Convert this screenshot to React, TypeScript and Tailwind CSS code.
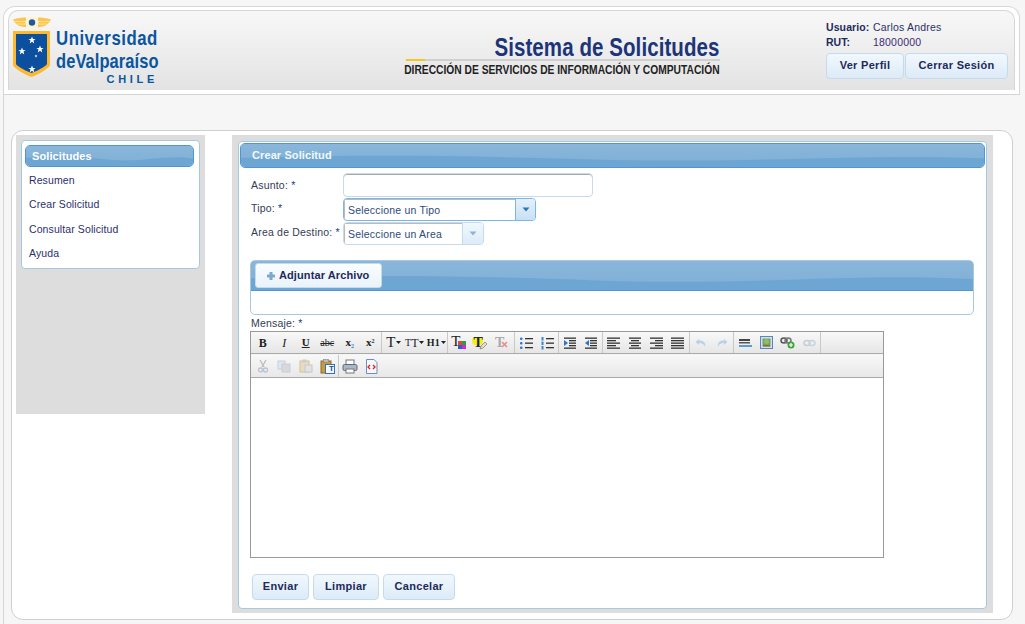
import React from "react";

const SANS = "font-['Liberation_Sans',Arial,sans-serif]";

function Wave({ id }: { id: string }) {
  return (
    <svg className="absolute inset-0 w-full h-full" viewBox="0 0 1000 100" preserveAspectRatio="none" aria-hidden="true">
      <defs>
        <linearGradient id={id} x1="0" y1="0" x2="0" y2="1">
          <stop offset="0" stopColor="#8ab6da" />
          <stop offset="1" stopColor="#82b1d7" />
        </linearGradient>
      </defs>
      <rect width="1000" height="100" fill="#6ea6d3" />
      <path d="M0 0H1000V62C820 40 690 88 470 66C300 50 160 46 0 60Z" fill={`url(#${id})`} />
    </svg>
  );
}

function BlueBar({ id, className, children }: { id: string; className: string; children?: React.ReactNode }) {
  return (
    <div className={`relative overflow-hidden border border-[#4f97d3] ${className}`}>
      <Wave id={id} />
      <div className="relative h-full flex items-center">{children}</div>
    </div>
  );
}

function Btn({ w, children, className = "" }: { w: string; children: React.ReactNode; className?: string }) {
  return (
    <button className={`h-[26px] pb-[2px] rounded-[4px] border border-[#c5dbec] bg-gradient-to-b from-[#f1f8fd] to-[#dcebf8] text-[11px] font-bold tracking-[0.3px] text-[#1d2a5a] ${w} ${className}`}>
      {children}
    </button>
  );
}

function Logo() {
  return (
    <div className="flex items-start w-[150px] h-[70px]">
      <svg width="38" height="62" viewBox="0 0 38 62" className="shrink-0" aria-hidden="true">
        <path d="M0 3.500C5 2 9 1.500 13 1.500L13 11C8 11 6 10 4 8.500C2 7 1 5 0 3.500ZM38 3.500C33 2 29 1.500 25 1.500L25 11C30 11 32 10 34 8.500C36 7 37 5 38 3.500Z" fill="#fbc64f" />
        <path d="M2 5.500H13M4 8H13M25 5.500H36M25 8H34" stroke="#fde7a6" strokeWidth="0.800" />
        <circle cx="19" cy="6.500" r="6.500" fill="#fff4d0" />
        <circle cx="19" cy="6.500" r="3.200" fill="#1c5aa6" />
        <path d="M0 15H37V49C37 51 29 57 18.500 61C8 57 0 51 0 49Z" fill="#fdb92e" />
        <path d="M3 18H34V48C34 49 27 54 18.500 57C10 54 3 49 3 48Z" fill="#0b4f9e" />
        {[[19, 24, 3.6], [9, 35, 3.6], [27, 33, 3.6], [19, 53, 3.6], [23, 40, 1.4]].map(([x, y, r], i) => (
          <path
            key={i}
            d={`M${x} ${y - r}L${x + r * 0.28} ${y - r * 0.3}L${x + r} ${y - r * 0.3}L${x + r * 0.42} ${y + r * 0.14}L${x + r * 0.62} ${y + r}L${x} ${y + r * 0.46}L${x - r * 0.62} ${y + r}L${x - r * 0.42} ${y + r * 0.14}L${x - r} ${y - r * 0.3}L${x - r * 0.28} ${y - r * 0.3}Z`}
            fill="#fff"
          />
        ))}
      </svg>
      <div className="ml-[5px] mt-[9px] w-[102px] text-[#0a55a0] font-bold">
        <div className="text-[21px] leading-[25px] tracking-[0.65px] whitespace-nowrap origin-left scale-x-[0.8]">Universidad</div>
        <div className="text-[21px] leading-[22px] tracking-[0.1px] whitespace-nowrap origin-left scale-x-[0.785]">deValparaíso</div>
        <div className="text-[11px] leading-[14px] tracking-[3.7px] text-right whitespace-nowrap">CHILE</div>
      </div>
    </div>
  );
}

function Header() {
  return (
    <div className="mx-[3px] w-[1017px] pt-[3px] px-[4px] h-[85px] bg-white rounded-t-[12px] border border-b-0 border-[#d8d8d8]">
      <div className="h-[80px] rounded-t-[10px] border border-b-0 border-[#d6d6d6] bg-gradient-to-b from-[#f8f8f8] to-[#e3e3e3] flex relative">
        <div className="ml-[4px] mt-[5px] w-[393px]">
          <Logo />
        </div>
        <div className="w-[314px] pt-[24px] flex flex-col items-end">
          <div className="text-[25px] leading-[24px] font-bold text-[#1c3478] tracking-[0.1px] whitespace-nowrap origin-right scale-x-[0.82]">Sistema de Solicitudes</div>
          <div className="w-full h-[2px] bg-[#d0d0d0] flex">
            <div className="w-[19px] bg-[#f6c71c]" />
          </div>
          <div className="text-[12.5px] leading-[14px] mt-[2px] font-bold text-[#222] whitespace-nowrap origin-right scale-x-[0.82]">DIRECCIÓN DE SERVICIOS DE INFORMACIÓN Y COMPUTACIÓN</div>
        </div>
        <div className="ml-[106px] pt-[9px] w-[185px] text-[10.5px] text-[#2b3166]">
          <div className="flex h-[14px] leading-[14px]"><b className="w-[47px] font-bold text-[#1d2a5a] tracking-[0.1px]">Usuario:</b><span className="tracking-[0.2px]">Carlos Andres</span></div>
          <div className="flex h-[15px] leading-[15px] mt-[1px]"><b className="w-[47px] font-bold text-[#1d2a5a]">RUT:</b><span className="tracking-[0.2px] text-[#3a2a76]">18000000</span></div>
          <div className="flex gap-px mt-[3px]">
            <Btn w="w-[78px]">Ver Perfil</Btn>
            <Btn w="w-[103px]">Cerrar Sesión</Btn>
          </div>
        </div>
      </div>
    </div>
  );
}

function Sidebar() {
  return (
    <div className="w-[189px] h-[279px] bg-[#dddddd] p-[5px]">
      <div className="h-[129px] w-[179px] bg-white rounded-[4px] border border-[#a6c9e2] pt-[4px] pl-[3px] pr-[5px]">
        <BlueBar id="w1" className="h-[22px] rounded-[5px]">
          <span className="pl-[6px] text-[11px] font-bold text-white tracking-[0.1px]">Solicitudes</span>
        </BlueBar>
        <div className="pl-[4px] pt-[1px] text-[10.5px] text-[#2b2f6c] tracking-[0.1px]">
          {["Resumen", "Crear Solicitud", "Consultar Solicitud", "Ayuda"].map((t) => (
            <div key={t} className="h-[24.3px] leading-[24px]">{t}</div>
          ))}
        </div>
      </div>
    </div>
  );
}

function Select({ text, w, tw, active }: { text: string; w: string; tw: string; active?: boolean }) {
  return (
    <div className={`h-[23px] rounded-[4px] bg-white flex border overflow-hidden ${w} ${active ? "border-[#79b7e7]" : "border-[#c5dbec]"}`}>
      <div className="flex-1 pl-[4px] leading-[22px] text-[10.5px] text-[#2e4a7a] tracking-[0.2px] shadow-[inset_1px_1px_0_#bbb]">{text}</div>
      <div className={`${tw} border-l ${active ? "border-[#79b7e7] from-[#e4f0fa] to-[#c8e0f4]" : "border-[#c5dbec] from-[#f1f8fd] to-[#dcebf8]"} bg-gradient-to-b flex items-center justify-center`}>
        <svg width="8" height="5" viewBox="0 0 8 5" aria-hidden="true"><path d="M0.500 0.500H7.500L4 4.500Z" fill={active ? "#2f76b8" : "#8fb4d8"} /></svg>
      </div>
    </div>
  );
}

function Lines({ kind }: { kind: "left" | "center" | "right" | "full" | "bul" | "num" | "in" | "out" }) {
  const rows = [3, 5.500, 8, 10.500, 13];
  const span = (i: number): [number, number] => {
    const short = i % 2 === 1;
    if (kind === "left") return [1, short ? 10 : 14];
    if (kind === "center") return short ? [4, 12] : [2, 14];
    if (kind === "right") return short ? [6, 14] : [1, 14];
    if (kind === "full") return [1, 14];
    if (kind === "bul" || kind === "num") return [7, 15];
    return i === 0 || i === 4 ? [2, 14] : [7, 14];
  };
  const list = kind === "bul" || kind === "num";
  return (
    <svg width="16" height="16" viewBox="0 0 16 16" aria-hidden="true">
      {(list ? [3.500, 8, 12.500] : rows).map((y, i) => {
        const [a, b] = span(i);
        return <rect key={y} x={a} y={y - 0.5} width={b - a} height="1.300" fill="#333" />;
      })}
      {kind === "bul" && [3.500, 8, 12.500].map((y) => <rect key={y} x="2" y={y - 1} width="2.500" height="2.500" rx="1" fill="#2a78c8" />)}
      {kind === "num" && [3.500, 8, 12.500].map((y) => <rect key={y} x="2.500" y={y - 1.5} width="2" height="3.500" fill="#3f85cc" />)}
      {kind === "in" && <path d="M2 5L6 8L2 11Z" fill="#2a78c8" />}
      {kind === "out" && <path d="M6 5L2 8L6 11Z" fill="#2a78c8" />}
    </svg>
  );
}

const serif = "font-['Liberation_Serif',serif] text-[#222]";

function TB({ children }: { children?: React.ReactNode }) {
  return <div className="w-[21.5px] h-full flex items-center justify-center shrink-0 relative">{children}</div>;
}

function G({ children, className = "" }: { children: React.ReactNode; className?: string }) {
  return <div className={`flex h-full border-r border-[#c8c8c8] ${className}`}>{children}</div>;
}

function SmallArrow() {
  return <svg width="5" height="3" viewBox="0 0 5 3" className="ml-px" aria-hidden="true"><path d="M0 0H5L2.500 3Z" fill="#222" /></svg>;
}

function Toolbar() {
  return (
    <div className="text-[#222]">
      <div className="h-[22px] flex pl-[1px] bg-gradient-to-b from-[#f8f8f8] to-[#e6e6e6] border-b border-[#aaa]">
        <G>
          <TB><span className={`${serif} font-bold text-[12px]`}>B</span></TB>
          <TB><span className={`${serif} italic text-[12px]`}>I</span></TB>
          <TB><span className={`${serif} font-bold underline text-[11px]`}>U</span></TB>
          <TB><span className={`${serif} line-through text-[10px]`}>abc</span></TB>
          <TB><span className={`${serif} font-bold text-[11px] ml-[2px]`}>x<sub className="text-[6px] text-[#3a7fc8]">2</sub></span></TB>
          <TB><span className={`${serif} font-bold text-[11px]`}>x<sup className="text-[6px] text-[#333]">2</sup></span></TB>
        </G>
        <G>
          <TB><span className={`${serif} text-[15px] leading-none flex items-center ml-[2px]`}>T<SmallArrow /></span></TB>
          <TB><span className={`${serif} text-[12px] leading-none flex items-center ml-[1px]`}><span className="text-[10px]">T</span>T<SmallArrow /></span></TB>
          <TB><span className={`${serif} font-bold text-[10px] leading-none flex items-center ml-[1px]`}>H1<SmallArrow /></span></TB>
        </G>
        <G className="pr-[2px]">
          <TB>
            <span className={`${serif} text-[15px] leading-none -mt-[2px] -ml-[5px]`}>T</span>
            <svg width="8" height="8" viewBox="0 0 8 8" className="absolute right-[3px] bottom-[4px]" aria-hidden="true">
              <rect width="4" height="4" fill="#e8482a" /><rect x="4" width="4" height="4" fill="#2f9e3a" /><rect y="4" width="4" height="4" fill="#2a5fd0" /><rect x="4" y="4" width="4" height="4" fill="#d02ad0" />
            </svg>
          </TB>
          <TB>
            <span className="absolute left-[3px] top-[5px] w-[11px] h-[8px] rounded-full bg-[#f2f215]" />
            <span className={`${serif} relative font-bold text-[14px] leading-none -ml-[3px]`}>T</span>
            <svg width="9" height="9" viewBox="0 0 9 9" className="absolute right-[3px] bottom-[3px]" aria-hidden="true"><path d="M1 8L2 5L6 1L8 3L4 7Z" fill="#e8e0c0" stroke="#777" strokeWidth="0.700" /></svg>
          </TB>
          <TB>
            <span className={`${serif} font-bold text-[14px] leading-none !text-[#aaa] -ml-[3px]`}>T</span>
            <svg width="7" height="7" viewBox="0 0 7 7" className="absolute right-[4px] bottom-[5px]" aria-hidden="true"><path d="M1 1L6 6M6 1L1 6" stroke="#e88" strokeWidth="1.500" /></svg>
          </TB>
        </G>
        <G>
          <TB><Lines kind="bul" /></TB>
          <TB><Lines kind="num" /></TB>
        </G>
        <G>
          <TB><Lines kind="in" /></TB>
          <TB><Lines kind="out" /></TB>
        </G>
        <G>
          <TB><Lines kind="left" /></TB>
          <TB><Lines kind="center" /></TB>
          <TB><Lines kind="right" /></TB>
          <TB><Lines kind="full" /></TB>
        </G>
        <G>
          <TB><svg width="14" height="12" viewBox="0 0 14 12" aria-hidden="true"><path d="M5 2L1.500 5L5 8V6C8 6 10 7 11 10C12 6 10 3.500 5 3.500Z" fill="#bcd0e6" /></svg></TB>
          <TB><svg width="14" height="12" viewBox="0 0 14 12" aria-hidden="true"><path d="M9 2L12.500 5L9 8V6C6 6 4 7 3 10C2 6 4 3.500 9 3.500Z" fill="#bcd0e6" /></svg></TB>
        </G>
        <G>
          <TB><svg width="14" height="12" viewBox="0 0 14 12" aria-hidden="true"><rect x="1" y="2" width="11" height="2" fill="#444" /><rect x="1" y="5" width="11" height="1.500" fill="#555" /><rect x="1" y="8" width="13" height="2" fill="#5b9bd8" /></svg></TB>
          <TB><svg width="13" height="13" viewBox="0 0 13 13" aria-hidden="true"><rect x="0.500" y="0.500" width="12" height="12" fill="#cfe0f2" stroke="#5c86b8" /><rect x="2.500" y="2.500" width="8" height="8" fill="#7aa06a" /><circle cx="6.500" cy="5.500" r="2.500" fill="#8fc05a" /><rect x="3" y="9" width="7" height="1.500" fill="#9a6a30" /></svg></TB>
          <TB><svg width="15" height="13" viewBox="0 0 15 13" aria-hidden="true"><ellipse cx="4" cy="4.500" rx="3" ry="2.500" fill="none" stroke="#555" strokeWidth="1.500" /><ellipse cx="8" cy="4.500" rx="3" ry="2.500" fill="none" stroke="#777" strokeWidth="1.500" /><circle cx="11" cy="9" r="3.500" fill="#3da53d" /><path d="M9 9H13M11 7V11" stroke="#fff" strokeWidth="1.200" /></svg></TB>
          <TB><svg width="15" height="12" viewBox="0 0 15 12" aria-hidden="true"><ellipse cx="5" cy="6" rx="3" ry="2.500" fill="none" stroke="#ccc" strokeWidth="1.500" /><ellipse cx="10" cy="6" rx="3" ry="2.500" fill="none" stroke="#c5d4e4" strokeWidth="1.500" /></svg></TB>
        </G>
      </div>
      <div className="h-px bg-[#f4f4f4]" />
      <div className="h-[23px] flex pl-[1px] bg-gradient-to-b from-[#f8f8f8] to-[#e8e8e8] border-b border-[#aaa]">
        <G>
          <TB><svg width="12" height="14" viewBox="0 0 12 14" aria-hidden="true"><path d="M3 1L7 8M9 1L5 8" stroke="#bbb" strokeWidth="1.300" /><circle cx="3.500" cy="11" r="2" fill="none" stroke="#b8c4d4" strokeWidth="1.300" /><circle cx="8.500" cy="11" r="2" fill="none" stroke="#b8c4d4" strokeWidth="1.300" /></svg></TB>
          <TB><svg width="14" height="13" viewBox="0 0 14 13" aria-hidden="true"><rect x="1" y="1" width="7" height="8" fill="#dfe6ef" stroke="#c8d0dc" /><rect x="5" y="4" width="8" height="8" fill="#d9d9d9" stroke="#c4cedc" /></svg></TB>
          <TB><svg width="14" height="14" viewBox="0 0 14 14" aria-hidden="true"><rect x="1" y="2" width="9" height="11" fill="#e8dcc0" stroke="#cfc0a0" /><rect x="3.500" y="0.500" width="4" height="3" fill="#ccc" /><rect x="6" y="6" width="7" height="7" fill="#e2e2e2" stroke="#c8c8c8" /></svg></TB>
          <TB>
            <svg width="15" height="15" viewBox="0 0 15 15" aria-hidden="true"><rect x="1" y="2" width="10" height="12" fill="#c89a3c" stroke="#8a6a2a" /><rect x="3.500" y="0.500" width="5" height="3" fill="#bbb" stroke="#777" strokeWidth="0.500" /><rect x="5.500" y="5.500" width="9" height="9" fill="#f2f8ff" stroke="#3a6fa8" /></svg>
            <span className={`absolute right-[4px] bottom-[4px] text-[8px] leading-none font-bold text-[#1e4f90] ${SANS}`}>T</span>
          </TB>
        </G>
        <TB><svg width="16" height="15" viewBox="0 0 16 15" aria-hidden="true"><rect x="4" y="1" width="8" height="5" fill="#fff" stroke="#777" /><rect x="1" y="5.500" width="14" height="6" rx="1.500" fill="#a8b8c8" stroke="#667" /><rect x="4" y="10" width="8" height="4" fill="#fff" stroke="#777" /></svg></TB>
        <TB><svg width="13" height="15" viewBox="0 0 13 15" aria-hidden="true"><path d="M1.500 0.500H9L12 3.500V14.500H1.500Z" fill="#f4f7fb" stroke="#6f8fb5" /><path d="M5 6L3 8L5 10M8 6L10 8L8 10" fill="none" stroke="#d22" strokeWidth="1.300" /></svg></TB>
      </div>
    </div>
  );
}

function Field({ label, children, className = "", lp }: { label: string; children: React.ReactNode; className?: string; lp: string }) {
  return (
    <div className={`flex items-start ${className}`}>
      <div className={`w-[93px] pl-[1px] text-[10.5px] leading-[18px] text-[#333c55] tracking-[0.2px] whitespace-nowrap ${lp}`}>
        {label} <span className="text-[#23408e]">*</span>
      </div>
      {children}
    </div>
  );
}

function Form() {
  return (
    <div className="w-[749px] h-[468px] bg-white rounded-[4px] border border-[#a6c9e2] pt-[1px] px-[1px]">
      <BlueBar id="w2" className="h-[25px] rounded-[5px]">
        <span className="pl-[11px] text-[11px] font-bold text-[#f2f7fb] tracking-[0.1px]">Crear Solicitud</span>
      </BlueBar>
      <div className="pl-[10px] pt-[5px]">
        <Field label="Asunto:" lp="pt-[3px]">
          <div className="w-[250px] h-[24px] rounded-[4px] border border-[#c5dbec] shadow-[inset_0_1px_0_#aaa] bg-white" />
        </Field>
        <Field label="Tipo:" className="mt-[1px]" lp="pt-[1px]">
          <Select text="Seleccione un Tipo" w="w-[193px]" tw="w-[20px]" active />
        </Field>
        <Field label="Area de Destino:" className="mt-[1px]" lp="pt-[1px]">
          <Select text="Seleccione un Area" w="w-[141px]" tw="w-[21px]" />
        </Field>
        <div className="mt-[15px] w-[724px] h-[55px] rounded-[5px] border border-[#a6c9e2] overflow-hidden">
          <BlueBar id="w3" className="h-[31px] -m-px border-[#4f97d3] w-[724px]">
            <div className="ml-[4px] w-[127px] h-[25px] rounded-[3px] border border-[#c5dbec] bg-gradient-to-b from-[#fbfdff] to-[#e9f3fb] flex items-center pl-[10px]">
              <svg width="10" height="10" viewBox="0 0 10 10" aria-hidden="true"><path d="M3.500 1H6.500V3.500H9V6.500H6.500V9H3.500V6.500H1V3.500H3.500Z" fill="#7ea9cf" /></svg>
              <span className="ml-[3px] text-[11px] font-bold text-[#1d2a5a] tracking-[0.1px]">Adjuntar Archivo</span>
            </div>
          </BlueBar>
        </div>
        <div className="h-[16px] leading-[16px] pl-[1px] text-[10.5px] text-[#333c55] tracking-[0.2px]">Mensaje: <span className="text-[#23408e]">*</span></div>
        <div className="w-[634px] h-[227px] border border-[#999] bg-white">
          <Toolbar />
        </div>
        <div className="flex gap-[4px] mt-[16px] ml-[2px]">
          <Btn w="w-[57px]">Enviar</Btn>
          <Btn w="w-[66px]">Limpiar</Btn>
          <Btn w="w-[72px]">Cancelar</Btn>
        </div>
      </div>
    </div>
  );
}

export default function App() {
  return (
    <div className={`w-[1025px] h-[624px] overflow-hidden bg-[#f6f6f6] pt-[6px] ${SANS}`}>
      <Header />
      <div className="mx-[3px] w-[1017px] h-[3px] bg-white border-x border-[#d8d8d8]" />
      <div className="mx-[3px] w-[1017px] h-[530px] border-l border-t border-[#d4d4d4] pt-[35px] pl-[7px]">
        <div className="w-[1002px] h-[490px] bg-white rounded-[12px] border border-[#cfcfcf] pt-[4px] pl-[4px] flex items-start">
          <Sidebar />
          <div className="ml-[27px] w-[761px] h-[478px] bg-[#dddddd] p-[6px]">
            <Form />
          </div>
        </div>
      </div>
    </div>
  );
}
